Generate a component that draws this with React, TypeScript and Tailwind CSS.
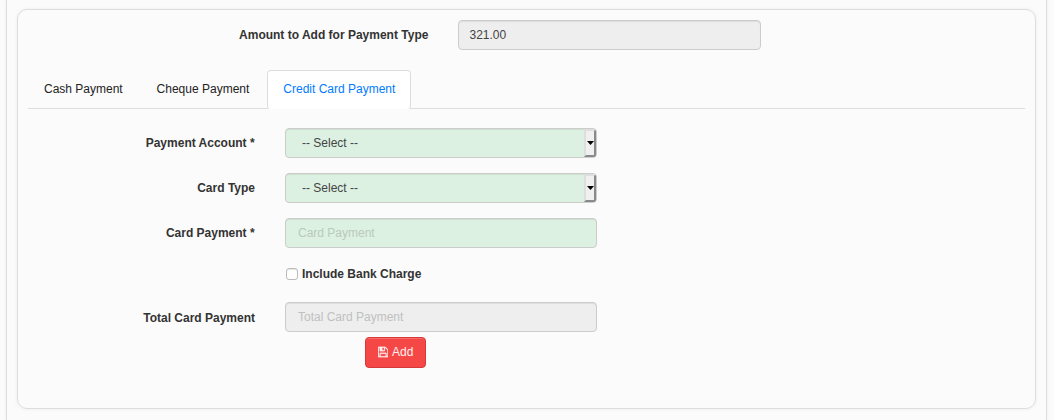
import React, { useState } from "react";

const fieldBase =
  "block h-[30px] w-[312px] rounded-[4px] border border-[#ccc] px-3 text-[12px] leading-[18px] shadow-[inset_0_1px_1px_rgba(0,0,0,0.075)] outline-none";

function Row({ label, labelClass = "", children }: { label: string; labelClass?: string; children: React.ReactNode }) {
  return (
    <div className="flex h-[30px] items-center">
      <label className={`w-[227px] shrink-0 text-right font-bold ${labelClass}`}>{label}</label>
      <div className="ml-[30px]">{children}</div>
    </div>
  );
}

function SelectBox() {
  return (
    <button
      type="button"
      className="flex h-[30px] w-[312px] overflow-hidden rounded-[4px] border border-[#ccc] bg-[#ddf1e2] pl-4 text-left text-[12px] text-[#444] shadow-[inset_0_1px_1px_rgba(0,0,0,0.075)]"
    >
      <span className="flex-1 leading-[28px]">-- Select --</span>
      <span className="flex h-[28px] w-[12px] items-center justify-center border-2 border-t-[#dedede] border-r-[#8a8a8a] border-b-[#8a8a8a] border-l-[#dedede] bg-[#f0f0f0]">
        <svg width="7" height="4" viewBox="0 0 7 4" className="shrink-0">
          <path d="M0 0h7L3.5 4z" fill="#000" />
        </svg>
      </span>
    </button>
  );
}

function FloppyIcon() {
  return (
    <svg width="10.3" height="12" viewBox="0 0 1536 1792" fill="currentColor" stroke="currentColor" strokeWidth="40" className="shrink-0">
      <path d="M384 1536h768v-384h-768v384zm896 0h128v-896q0-14-10-38.500t-20-34.500l-281-281q-10-10-34-20t-39-10v416q0 40-28 68t-68 28h-576q-40 0-68-28t-28-68v-416h-128v1280h128v-416q0-40 28-68t68-28h832q40 0 68 28t28 68v416zm-384-928v-320q0-13-9.500-22.500t-22.500-9.500h-192q-13 0-22.500 9.500t-9.500 22.500v320q0 13 9.500 22.500t22.500 9.500h192q13 0 22.500-9.500t9.500-22.500zm640 32v928q0 40-28 68t-68 28h-1344q-40 0-68-28t-28-68v-1344q0-40 28-68t68-28h928q40 0 88 20t76 48l280 280q28 28 48 76t20 88z" />
    </svg>
  );
}

export default function App() {
  const [charge, setCharge] = useState(false);
  return (
    <div className="h-[420px] w-[1054px] overflow-hidden bg-[#fbfbfb] px-[6px] font-['Liberation_Sans',Arial,sans-serif] text-[12px] leading-[18px] text-[#333]">
      <div className="h-[420px] w-[1041px] border-x border-[#ddd] px-[10px] pt-[9px] shadow-[0_0_4px_rgba(0,0,0,0.06)]">
        <div className="h-[400px] w-[1019px] rounded-[10px] border border-[#ddd] px-[10px] pt-[10px] shadow-[0_0_4px_rgba(0,0,0,0.06)]">
          <div className="flex h-[30px] items-center">
            <label className="w-[400.4px] shrink-0 text-right font-bold">Amount to Add for Payment Type</label>
            <input
              readOnly
              value="321.00"
              className="ml-[29.6px] h-[30px] w-[303px] rounded-[4px] border border-[#ccc] bg-[#eee] pl-[10.5px] text-[12px] text-[#444] shadow-[inset_0_1px_1px_rgba(0,0,0,0.075)] outline-none"
            />
          </div>

          <div className="mt-5 flex h-[39px] border-b border-[#ddd] text-[#222]">
            <a className="w-[113px] pt-[10px] pl-4">Cash Payment</a>
            <a className="w-[126px] pt-[10px] pl-[15.6px]">Cheque Payment</a>
            <a className="h-[39px] w-[144px] rounded-[4px] border border-[#ddd] border-b-white bg-white pt-[9px] pl-[15.3px] text-[#007bff]">
              Credit Card Payment
            </a>
          </div>

          <div className="mt-[19px] flex flex-col gap-[15px]">
            <Row label="Payment Account *" labelClass="pr-[0.4px]">
              <SelectBox />
            </Row>
            <Row label="Card Type">
              <SelectBox />
            </Row>
            <Row label="Card Payment *" labelClass="pr-[0.4px]">
              <input placeholder="Card Payment" className={`${fieldBase} bg-[#ddf1e2] placeholder:text-[#b9c9bd]`} />
            </Row>
          </div>

          <label className="mt-[17px] ml-[258px] flex h-[18px] w-[160px] items-center font-bold">
            <input
              type="checkbox"
              checked={charge}
              onChange={(e) => setCharge(e.target.checked)}
              className="mr-1 size-3 appearance-none rounded-[3px] border border-[#bbb] bg-white shadow-[inset_0_1px_1px_rgba(0,0,0,0.1)] checked:bg-[#0d6efd]"
            />
            Include Bank Charge
          </label>

          <div className="mt-[19px]">
            <Row label="Total Card Payment" labelClass="pt-[2px]">
              <input readOnly placeholder="Total Card Payment" className={`${fieldBase} bg-[#eee] placeholder:text-[#c0c0c0]`} />
            </Row>
          </div>
          <button
            type="button"
            className="mt-[5px] ml-[337px] flex h-[31px] w-[61px] items-center justify-center gap-1 rounded-[4px] border border-[#d43a3a] bg-[#f64747] pb-[2px] text-[12px] text-[#fff0f0] shadow-[inset_0_1px_0_rgba(255,255,255,0.2)]"
          >
            <FloppyIcon />
            Add
          </button>
        </div>
      </div>
    </div>
  );
}
